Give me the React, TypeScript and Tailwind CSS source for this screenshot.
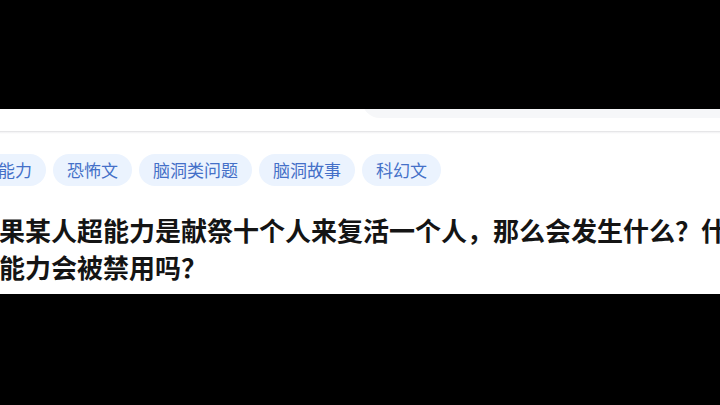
import React from "react";

const tags = ["超能力", "恐怖文", "脑洞类问题", "脑洞故事", "科幻文"];

export default function App() {
  return (
    <div
      className="w-[720px] h-[405px] bg-black overflow-hidden flex flex-col"
      style={{ fontFamily: '"Noto Sans CJK SC", "Noto Sans", sans-serif' }}
    >
      <div className="h-[109px] shrink-0" />
      <div className="h-[185px] shrink-0 bg-white overflow-hidden flex flex-col">
        <div className="h-[22px] shrink-0 flex">
          <div className="ml-[362px] mt-[-22px] h-[31px] w-[400px] bg-[#f6f7f9] rounded-bl-[18px]" />
        </div>
        <div className="h-[1px] bg-[#e6e6e8] shrink-0" />
        <div className="h-[2px] bg-gradient-to-b from-[#f1f1f3] to-white shrink-0" />
        <div className="mt-[20px] flex gap-[7px] ml-[-33px] whitespace-nowrap">
          {tags.map((t) => (
            <div
              key={t}
              className="h-[32px] px-[14px] rounded-full bg-[#ebf3fe] text-[#4470c8] text-[17px] leading-[32px] shrink-0"
            >
              {t}
            </div>
          ))}
        </div>
        <div className="mt-[25px] ml-[-27px] text-[26px] leading-[37px] font-bold text-[#141414] whitespace-nowrap">
          <div>如果某人超能力是献祭十个人来复活一个人，那么会发生什么？什么</div>
          <div>超能力会被禁用吗？</div>
        </div>
      </div>
      <div className="flex-1" />
    </div>
  );
}
